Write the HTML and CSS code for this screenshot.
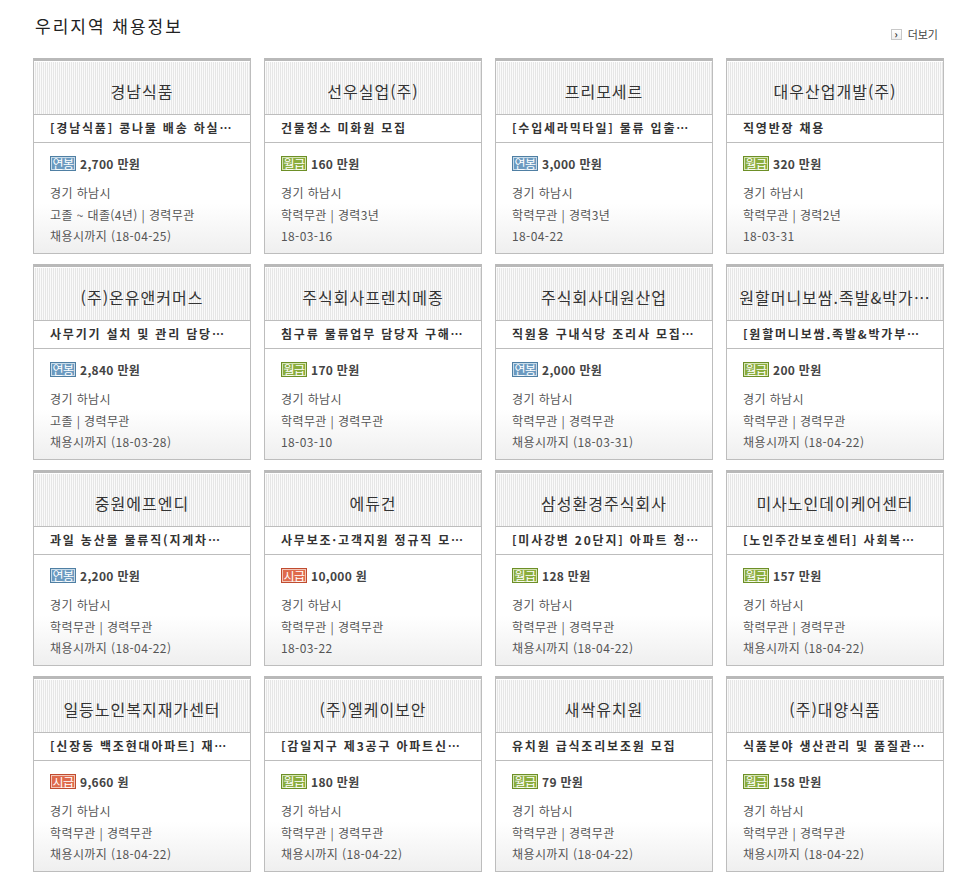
FILE: index.html
```html
<!DOCTYPE html>
<html lang="ko">
<head>
<meta charset="utf-8">
<link rel="stylesheet" href="styles.css">
</head>
<body>
<div class="wrap">
  <div class="top">
    <h2 class="title">우리지역 채용정보</h2>
    <a class="more"><span class="more-ico">›</span>더보기</a>
  </div>
  <div class="grid">
    <div class="card"><div class="co">경남식품</div><div class="job">[경남식품] 콩나물 배송 하실…</div><div class="body"><div class="pay"><span class="bdg b-y">연봉</span>2,700 만원</div><p>경기 하남시</p><p>고졸 ~ 대졸(4년) | 경력무관</p><p>채용시까지 (18-04-25)</p></div></div>
    <div class="card"><div class="co">선우실업(주)</div><div class="job">건물청소 미화원 모집</div><div class="body"><div class="pay"><span class="bdg b-m">월급</span>160 만원</div><p>경기 하남시</p><p>학력무관 | 경력3년</p><p>18-03-16</p></div></div>
    <div class="card"><div class="co">프리모세르</div><div class="job">[수입세라믹타일] 물류 입출…</div><div class="body"><div class="pay"><span class="bdg b-y">연봉</span>3,000 만원</div><p>경기 하남시</p><p>학력무관 | 경력3년</p><p>18-04-22</p></div></div>
    <div class="card"><div class="co">대우산업개발(주)</div><div class="job">직영반장 채용</div><div class="body"><div class="pay"><span class="bdg b-m">월급</span>320 만원</div><p>경기 하남시</p><p>학력무관 | 경력2년</p><p>18-03-31</p></div></div>

    <div class="card"><div class="co">(주)온유앤커머스</div><div class="job">사무기기 설치 및 관리 담당…</div><div class="body"><div class="pay"><span class="bdg b-y">연봉</span>2,840 만원</div><p>경기 하남시</p><p>고졸 | 경력무관</p><p>채용시까지 (18-03-28)</p></div></div>
    <div class="card"><div class="co">주식회사프렌치메종</div><div class="job">침구류 물류업무 담당자 구해…</div><div class="body"><div class="pay"><span class="bdg b-m">월급</span>170 만원</div><p>경기 하남시</p><p>학력무관 | 경력무관</p><p>18-03-10</p></div></div>
    <div class="card"><div class="co">주식회사대원산업</div><div class="job">직원용 구내식당 조리사 모집…</div><div class="body"><div class="pay"><span class="bdg b-y">연봉</span>2,000 만원</div><p>경기 하남시</p><p>학력무관 | 경력무관</p><p>채용시까지 (18-03-31)</p></div></div>
    <div class="card"><div class="co">원할머니보쌈.족발&amp;박가…</div><div class="job">[원할머니보쌈.족발&amp;박가부…</div><div class="body"><div class="pay"><span class="bdg b-m">월급</span>200 만원</div><p>경기 하남시</p><p>학력무관 | 경력무관</p><p>채용시까지 (18-04-22)</p></div></div>

    <div class="card"><div class="co">중원에프엔디</div><div class="job">과일 농산물 물류직(지게차…</div><div class="body"><div class="pay"><span class="bdg b-y">연봉</span>2,200 만원</div><p>경기 하남시</p><p>학력무관 | 경력무관</p><p>채용시까지 (18-04-22)</p></div></div>
    <div class="card"><div class="co">에듀건</div><div class="job">사무보조·고객지원 정규직 모…</div><div class="body"><div class="pay"><span class="bdg b-s">시급</span>10,000 원</div><p>경기 하남시</p><p>학력무관 | 경력무관</p><p>18-03-22</p></div></div>
    <div class="card"><div class="co">삼성환경주식회사</div><div class="job">[미사강변 20단지] 아파트 청…</div><div class="body"><div class="pay"><span class="bdg b-m">월급</span>128 만원</div><p>경기 하남시</p><p>학력무관 | 경력무관</p><p>채용시까지 (18-04-22)</p></div></div>
    <div class="card"><div class="co">미사노인데이케어센터</div><div class="job">[노인주간보호센터] 사회복…</div><div class="body"><div class="pay"><span class="bdg b-m">월급</span>157 만원</div><p>경기 하남시</p><p>학력무관 | 경력무관</p><p>채용시까지 (18-04-22)</p></div></div>

    <div class="card"><div class="co">일등노인복지재가센터</div><div class="job">[신장동 백조현대아파트] 재…</div><div class="body"><div class="pay"><span class="bdg b-s">시급</span>9,660 원</div><p>경기 하남시</p><p>학력무관 | 경력무관</p><p>채용시까지 (18-04-22)</p></div></div>
    <div class="card"><div class="co">(주)엘케이보안</div><div class="job">[감일지구 제3공구 아파트신…</div><div class="body"><div class="pay"><span class="bdg b-m">월급</span>180 만원</div><p>경기 하남시</p><p>학력무관 | 경력무관</p><p>채용시까지 (18-04-22)</p></div></div>
    <div class="card"><div class="co">새싹유치원</div><div class="job">유치원 급식조리보조원 모집</div><div class="body"><div class="pay"><span class="bdg b-m">월급</span>79 만원</div><p>경기 하남시</p><p>학력무관 | 경력무관</p><p>채용시까지 (18-04-22)</p></div></div>
    <div class="card"><div class="co">(주)대양식품</div><div class="job">식품분야 생산관리 및 품질관…</div><div class="body"><div class="pay"><span class="bdg b-m">월급</span>158 만원</div><p>경기 하남시</p><p>학력무관 | 경력무관</p><p>채용시까지 (18-04-22)</p></div></div>
  </div>
</div>
</body>
</html>
```
FILE: styles.css
```css
* { box-sizing: border-box; }
html, body { margin: 0; padding: 0; background: #fff; }
body {
  font-family: "Noto Sans CJK KR", "Noto Sans", sans-serif;
  color: #555;
  font-size: 12px;
}
.wrap {
  width: 944px;
  padding: 0 0 0 33px;
}
.top {
  height: 58px;
  display: flex;
  justify-content: space-between;
  align-items: flex-start;
}
.title {
  margin: 14px 0 0 2px;
  font-size: 17px;
  font-weight: normal;
  color: #222;
  letter-spacing: 2px;
  line-height: 24px;
}
.more {
  margin-top: 27px;
  margin-right: 6px;
  display: flex;
  align-items: center;
  font-size: 11px;
  color: #444;
  line-height: 14px;
}
.more-ico {
  width: 11px;
  height: 11px;
  border: 1px solid #c8c8c8;
  background: linear-gradient(#fff, #eee);
  margin-right: 6px;
  font-size: 10px;
  line-height: 8px;
  text-align: center;
  color: #333;
  font-weight: bold;
}
.grid {
  display: grid;
  grid-template-columns: repeat(4, 218px);
  column-gap: 13px;
  row-gap: 10px;
}
.card {
  height: 196px;
  border: 1px solid #bdbdbd;
  border-top: 3px solid #b9b9b9;
  display: flex;
  flex-direction: column;
}
.co {
  height: 54px;
  border-bottom: 1px solid #bdbdbd;
  border-top: 1px solid #fff;
  background: repeating-linear-gradient(90deg, #fafafa 0 1px, #e6e6e6 1px 2px);
  text-align: center;
  font-size: 16px;
  line-height: 58px;
  color: #333;
  letter-spacing: 1px;
  white-space: nowrap;
  overflow: hidden;
  padding: 0 4px;
}
.job {
  height: 28px;
  border-bottom: 1px solid #bdbdbd;
  padding: 0 0 0 16px;
  font-size: 12px;
  font-weight: bold;
  color: #333;
  line-height: 26px;
  letter-spacing: 1.8px;
  white-space: nowrap;
  overflow: hidden;
}
.body {
  flex: 1;
  padding: 12px 0 0 16px;
  background: linear-gradient(#fff 55%, #efefef 100%);
}
.pay {
  display: flex;
  align-items: center;
  height: 16px;
  font-size: 12px;
  font-weight: bold;
  color: #444;
  margin-bottom: 11px;
  letter-spacing: 0.3px;
}
.bdg {
  display: inline-block;
  width: 26px;
  height: 15px;
  font-size: 12px;
  line-height: 13px;
  text-align: center;
  color: #fff;
  font-weight: normal;
  letter-spacing: -0.5px;
  margin-right: 4px;
  border: 1px solid;
}
.b-y { background: #6b9ac0; border-color: #4f7fa3; box-shadow: inset 0 0 0 1px #c7dbea; }
.b-m { background: #8bad3d; border-color: #6d8f27; box-shadow: inset 0 0 0 1px #d5e4b4; }
.b-s { background: #df6a4c; border-color: #c04c30; box-shadow: inset 0 0 0 1px #f3c6b8; }
.body p {
  margin: 0;
  line-height: 21.5px;
  font-size: 12px;
  color: #555;
  letter-spacing: 0.4px;
  white-space: nowrap;
}
```
